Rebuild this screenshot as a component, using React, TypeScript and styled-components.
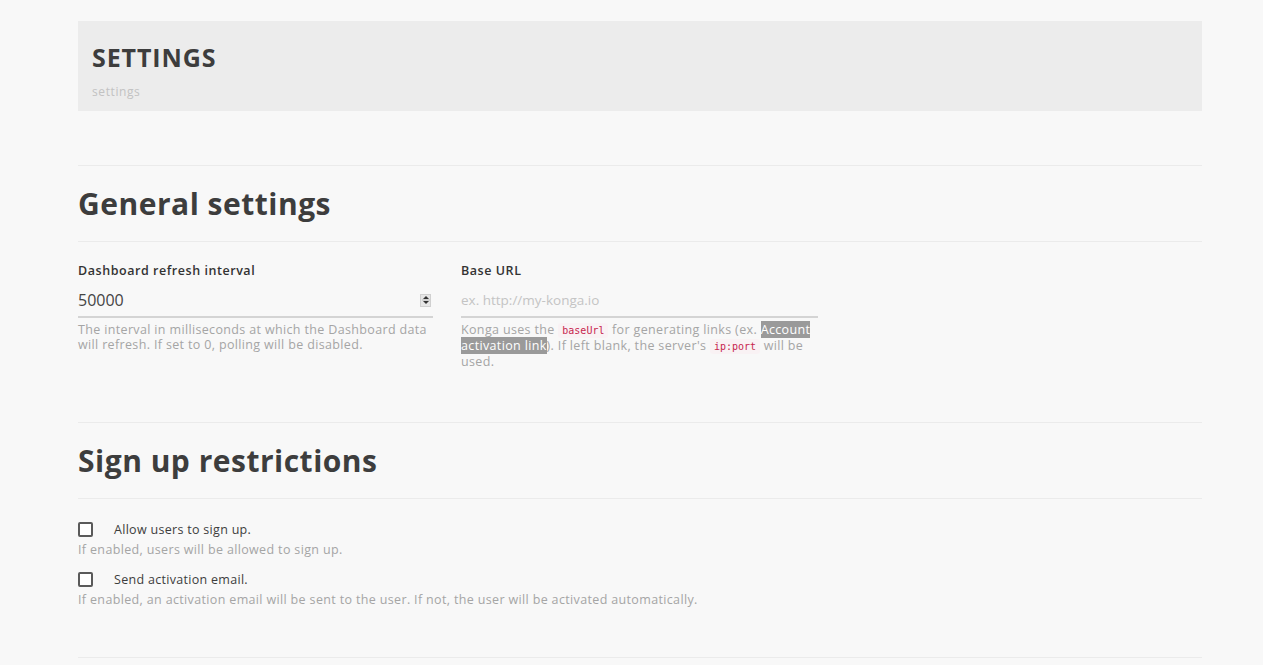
import React from 'react';
import styled, { createGlobalStyle } from 'styled-components';

const GlobalStyle = createGlobalStyle`
  html, body {
    margin: 0;
    padding: 0;
    background: #f8f8f8;
    font-family: "Open Sans", "Liberation Sans", sans-serif;
    color: #444;
  }
`;

function Spinner() {
  return (
    <SpinBox>
      <svg width="8" height="10" viewBox="0 0 8 10">
        <path d="M4 1 L7 4 L1 4 Z" fill="#333" />
        <line x1="0" y1="5" x2="8" y2="5" stroke="#bbb" strokeWidth="1" />
        <path d="M1 6 L7 6 L4 9 Z" fill="#333" />
      </svg>
    </SpinBox>
  );
}

function CheckRow({ label, help }: { label: string; help: string }) {
  return (
    <CheckItem>
      <CheckLine>
        <Box />
        <CheckLabel>{label}</CheckLabel>
      </CheckLine>
      <Help>{help}</Help>
    </CheckItem>
  );
}

export default function App() {
  return (
    <>
      <GlobalStyle />
      <Page>
        <Banner>
          <BannerTitle>SETTINGS</BannerTitle>
          <BannerSub>settings</BannerSub>
        </Banner>

        <Section>
          <SectionTitle>General settings</SectionTitle>
          <Fields>
            <Field>
              <Label>Dashboard refresh interval</Label>
              <Input>
                <Value>50000</Value>
                <Spinner />
              </Input>
              <Help>
                The interval in milliseconds at which the Dashboard data will refresh. If set to 0,
                polling will be disabled.
              </Help>
            </Field>
            <Field>
              <Label>Base URL</Label>
              <Input>
                <Placeholder>ex. http://my-konga.io</Placeholder>
              </Input>
              <Help>
                Konga uses the <Code>baseUrl</Code> for generating links (ex.{' '}
                <Mark>Account activation link</Mark>). If left blank, the server's{' '}
                <Code>ip:port</Code> will be used.
              </Help>
            </Field>
          </Fields>
        </Section>

        <Section>
          <SectionTitle>Sign up restrictions</SectionTitle>
          <Checks>
            <CheckRow label="Allow users to sign up." help="If enabled, users will be allowed to sign up." />
            <CheckRow
              label="Send activation email."
              help="If enabled, an activation email will be sent to the user. If not, the user will be activated automatically."
            />
          </Checks>
        </Section>
        <Rule />
      </Page>
    </>
  );
}

const Page = styled.div`
  width: 1124px;
  padding-top: 21px;
  padding-left: 78px;
  box-sizing: content-box;
`;

const Banner = styled.div`
  background: #ececec;
  height: 90px;
  box-sizing: border-box;
  padding: 19px 14px 0;
`;

const BannerTitle = styled.h1`
  margin: 0;
  font-size: 25px;
  font-weight: 700;
  line-height: 34px;
  letter-spacing: 0.9px;
  color: #3d3d3d;
`;

const BannerSub = styled.div`
  margin-top: 9px;
  font-size: 12px;
  letter-spacing: 0.6px;
  color: #c2c2c2;
`;

const Section = styled.section`
  border-top: 1px solid #ebebeb;
  margin-top: 54px;

  & + & {
    margin-top: 53px;
  }
`;

const SectionTitle = styled.h2`
  margin: 0;
  padding: 18px 0 17px;
  font-size: 30px;
  line-height: 40px;
  font-weight: 700;
  letter-spacing: 0.5px;
  color: #3d3d3d;
  border-bottom: 1px solid #ebebeb;
`;

const Fields = styled.div`
  display: grid;
  grid-template-columns: 355px 357px;
  column-gap: 28px;
  padding-top: 20px;
`;

const Field = styled.div`
  display: flex;
  flex-direction: column;
`;

const Label = styled.label`
  font-size: 12.5px;
  font-weight: 600;
  line-height: 18px;
  letter-spacing: 0.55px;
  color: #333;
`;

const Input = styled.div`
  display: flex;
  align-items: center;
  justify-content: space-between;
  height: 34px;
  margin-top: 4px;
  border-bottom: 2px solid #d4d4d4;
  box-sizing: border-box;
`;

const Value = styled.span`
  font-size: 16px;
  color: #444;
`;

const Placeholder = styled.span`
  font-size: 13.5px;
  color: #c4c4c4;
`;

const SpinBox = styled.span`
  display: flex;
  align-items: center;
  justify-content: center;
  width: 11px;
  height: 13px;
  margin-right: 2px;
  background: #e6e6e6;
  border: 1px solid #d0d0d0;
  box-sizing: border-box;
`;

const Help = styled.p`
  margin: 4px 0 0;
  font-size: 12.5px;
  line-height: 15px;
  letter-spacing: 0.35px;
  color: #a5a5a5;
`;

const Code = styled.code`
  font-family: "DejaVu Sans Mono", "Liberation Mono", monospace;
  font-size: 10px;
  letter-spacing: 0;
  color: #c7254e;
  background: #f9f2f4;
  padding: 2px 4px;
  border-radius: 3px;
`;

const Mark = styled.span`
  background: #9a9a9a;
  color: #fff;
`;

const Checks = styled.div`
  padding-top: 22px;
  padding-bottom: 50px;
  display: flex;
  flex-direction: column;
  gap: 14px;
`;

const CheckItem = styled.div`
  display: flex;
  flex-direction: column;
`;

const CheckLine = styled.div`
  display: flex;
  align-items: center;
  gap: 21px;
`;

const Box = styled.span`
  width: 15px;
  height: 15px;
  border: 2px solid #5a5a5a;
  border-radius: 2px;
  box-sizing: border-box;
  background: #fff;
`;

const CheckLabel = styled.span`
  font-size: 12.5px;
  letter-spacing: 0.3px;
  color: #3d3d3d;
`;

const Rule = styled.hr`
  margin: 0;
  border: 0;
  border-top: 1px solid #ebebeb;
`;
